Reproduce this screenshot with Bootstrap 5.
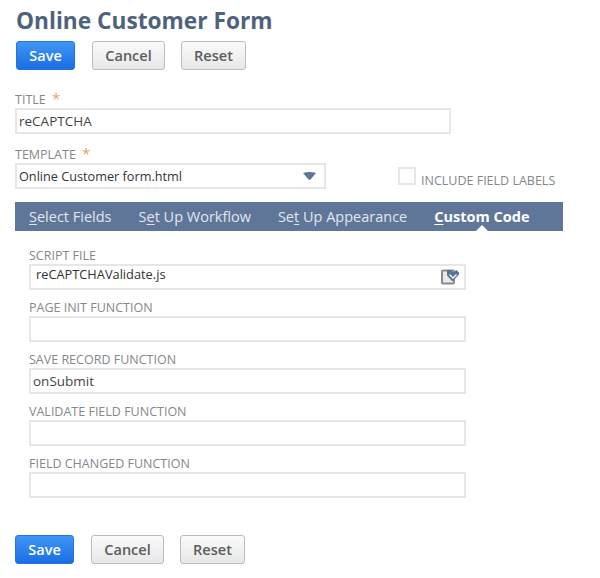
<!DOCTYPE html>
<html lang="en">
<head>
<meta charset="utf-8">
<title>Online Customer Form</title>
<link href="https://cdn.jsdelivr.net/npm/bootstrap@5.3.0/dist/css/bootstrap.min.css" rel="stylesheet">
<style>
body{font-family:"Open Sans","Liberation Sans",sans-serif;background:#fff;color:#333;width:600px;height:578px;overflow:hidden}
.page-wrap{padding:7px 0 0 15px;width:600px}
.form-heading{font-size:22.7px;line-height:28px;font-weight:700;color:#4f627c;margin:0 0 6px 1px;white-space:nowrap}
.act-row{gap:17px;margin-left:1px}
.act-row.low{margin-left:0;margin-top:37px}
.act-btn{height:29px;padding:0;font-size:14.500px;font-weight:600;line-height:27px;border-radius:3px;border:1px solid #bcbcbc;background:linear-gradient(#fafafa,#e7e7e7);color:#5c5c5c}
.act-btn.save{width:59px;background:linear-gradient(#3f97f5,#1a6de4);border-color:#2176e2;color:#fff}
.act-btn.cancel{width:73px}
.act-btn.reset{width:65px;margin-left:-1px}
.fld-label{display:block;font-size:12.500px;line-height:17px;color:#85878a;margin:0;text-transform:uppercase;white-space:nowrap}
.req{color:#dba95f;font-size:15px;line-height:12px;margin-left:3px}
.fld-box{height:26px;border:2px solid #e6e6e6;background:#fff;font-size:13.500px;line-height:23px;color:#444;padding:0 2px 0 2px}
.title-block{margin-top:21px}
.title-box{width:436px}
.tpl-block{margin-top:12px}
.tpl-row{width:545px}
.tpl-box{width:311px;font-size:12.700px;padding-left:2px;line-height:18px;color:#333}
.caret{width:13px;height:8px;margin-right:6px;flex:none}
.chk-wrap{margin-left:72px;margin-top:21px}
.chk-box{width:18px;height:18px;border:2px solid #e6e6e6;flex:none}
.chk-text{font-size:12.500px;line-height:17px;color:#85878a;margin:5px 0 0 5px;white-space:nowrap}
.tab-bar{width:548px;height:29px;background:#5f7699;margin-top:13px;padding-left:14px;gap:27px;font-size:14.500px;line-height:29px;color:#e0e6ee}
.tab-item{position:relative;white-space:nowrap}
.tab-item u{text-underline-offset:2px}
.tab-item.on{color:#fff;font-weight:700}
.tab-item.on::after{content:"";position:absolute;left:50%;bottom:0;margin-left:-6px;border:6px solid transparent;border-top:0;border-bottom-color:#fff}
.code-pane{padding:16px 0 0 14px;width:450px}
.code-group{margin-bottom:9px}
.code-box{width:437px}
.icon-pick{width:18px;height:16px;flex:none;margin-right:3px}
.script-text{font-size:12.800px;margin-top:-6px;color:#333;padding-left:3px}
</style>
</head>
<body>
<div class="page-wrap">
  <h1 class="form-heading">Online Customer Form</h1>
  <div class="d-flex act-row">
    <button type="button" class="btn act-btn save">Save</button>
    <button type="button" class="btn act-btn cancel">Cancel</button>
    <button type="button" class="btn act-btn reset">Reset</button>
  </div>

  <div class="title-block">
    <label class="fld-label">Title <span class="req">*</span></label>
    <div class="fld-box title-box">reCAPTCHA</div>
  </div>

  <div class="tpl-block d-flex tpl-row">
    <div>
      <label class="fld-label">Template <span class="req">*</span></label>
      <div class="fld-box tpl-box d-flex align-items-center justify-content-between">
        <span class="tpl-text">Online Customer form.html</span>
        <svg class="caret" viewBox="0 0 13 8"><path d="M0 1Q6.500-1 13 1L7.500 7.500Q6.500 8 5.500 7.500Z" fill="#5f7699"/></svg>
      </div>
    </div>
    <div class="d-flex align-items-start chk-wrap">
      <span class="chk-box"></span>
      <span class="chk-text">INCLUDE FIELD LABELS</span>
    </div>
  </div>

  <div class="d-flex tab-bar flex-nowrap">
    <span class="tab-item"><u>S</u>elect Fields</span>
    <span class="tab-item">S<u>e</u>t Up Workflow</span>
    <span class="tab-item">Se<u>t</u> Up Appearance</span>
    <span class="tab-item on"><u>C</u>ustom Code</span>
  </div>

  <div class="code-pane">
    <div class="code-group">
      <label class="fld-label">Script File</label>
      <div class="fld-box code-box d-flex align-items-center justify-content-between">
        <span class="script-text">reCAPTCHAValidate.js</span>
        <svg class="icon-pick" viewBox="0 0 18 16">
          <rect x="1" y="1.500" width="12" height="13" rx="1" fill="#e8e8e8" stroke="#8a8a8a" stroke-width="2"/>
          <path d="M6 1h4l2.500 2.500L15.500 1l2.500 2.500v2L12 12h-1L6 6.500z" fill="#56739b"/>
          <path d="M8.500 5.500L12 9l3.500-3.500" fill="none" stroke="#fff" stroke-width="1.300"/>
        </svg>
      </div>
    </div>
    <div class="code-group">
      <label class="fld-label">Page Init Function</label>
      <div class="fld-box code-box"></div>
    </div>
    <div class="code-group">
      <label class="fld-label">Save Record Function</label>
      <div class="fld-box code-box">onSubmit</div>
    </div>
    <div class="code-group">
      <label class="fld-label">Validate Field Function</label>
      <div class="fld-box code-box"></div>
    </div>
    <div class="code-group">
      <label class="fld-label">Field Changed Function</label>
      <div class="fld-box code-box"></div>
    </div>
  </div>

  <div class="d-flex act-row low">
    <button type="button" class="btn act-btn save">Save</button>
    <button type="button" class="btn act-btn cancel">Cancel</button>
    <button type="button" class="btn act-btn reset">Reset</button>
  </div>
</div>
<script src="https://cdn.jsdelivr.net/npm/bootstrap@5.3.0/dist/js/bootstrap.bundle.min.js"></script>
</body>
</html>
